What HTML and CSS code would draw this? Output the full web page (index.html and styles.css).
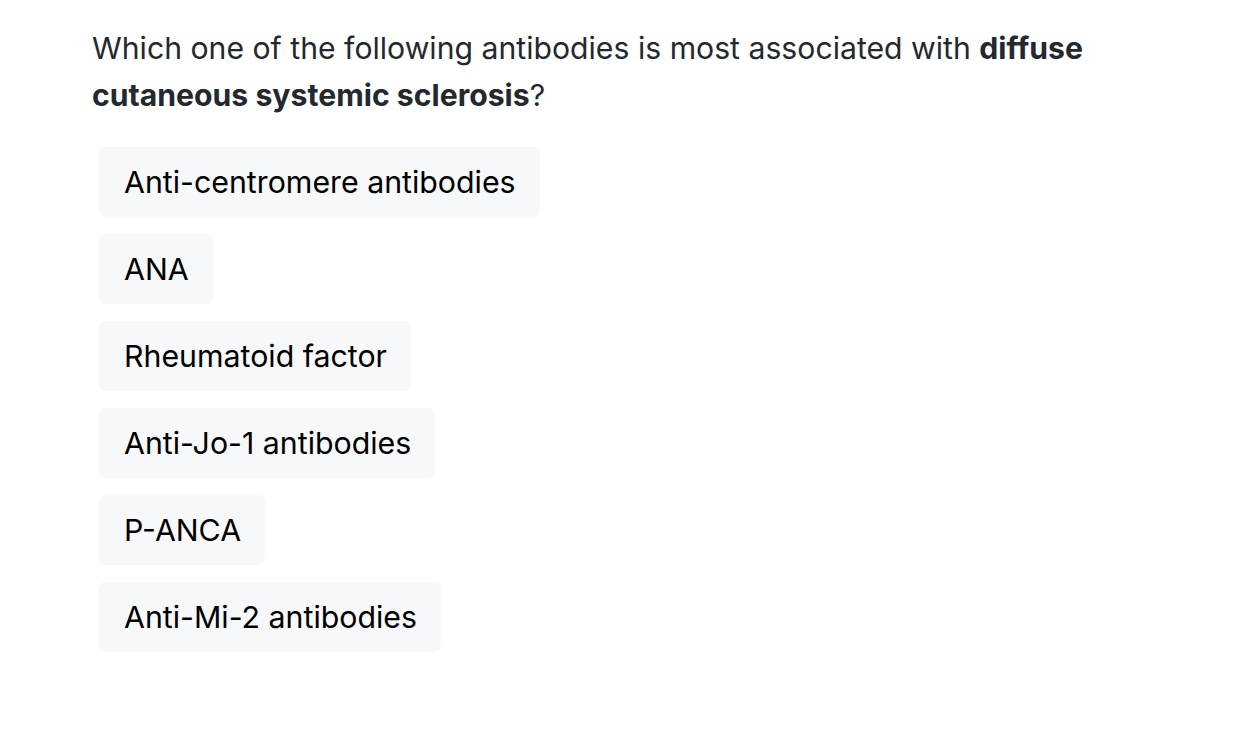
FILE: index.html
```html
<!DOCTYPE html>
<html>
<head>
<meta charset="utf-8">
<link rel="stylesheet" href="styles.css">
</head>
<body>
<main class="quiz">
  <p class="question">Which one of the following antibodies is most associated with <strong>diffuse cutaneous systemic sclerosis</strong>?</p>
  <div class="options">
    <button class="option">Anti-centromere antibodies</button>
    <button class="option">ANA</button>
    <button class="option">Rheumatoid factor</button>
    <button class="option">Anti-Jo-1 antibodies</button>
    <button class="option">P-ANCA</button>
    <button class="option">Anti-Mi-2 antibodies</button>
  </div>
</main>
</body>
</html>
```
FILE: styles.css
```css
html, body {
  margin: 0;
  padding: 0;
  background: #ffffff;
}
body {
  font-family: Inter, "Liberation Sans", sans-serif;
}
.quiz {
  padding: 25px 92px 0 92px;
  max-width: 1072px;
}
.question {
  margin: 0;
  font-size: 30.2px;
  line-height: 47px;
  color: #24292f;
}
.question strong {
  font-weight: 700;
}
.options {
  display: flex;
  flex-direction: column;
  align-items: flex-start;
  gap: 17px;
  margin-top: 28px;
  padding-left: 7px;
}
.option {
  font-family: inherit;
  font-size: 30.3px;
  color: #000000;
  background: #f6f8fa;
  border: none;
  border-radius: 7px;
  height: 70px;
  padding: 0 24px 0 25px;
  cursor: pointer;
}
```
